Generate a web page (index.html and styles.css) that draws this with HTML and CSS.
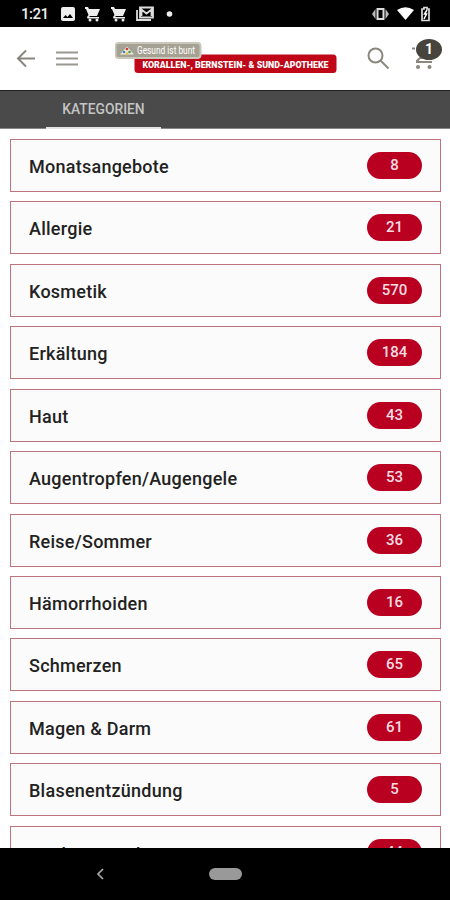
FILE: index.html
```html
<!DOCTYPE html>
<html lang="de">
<head>
    <meta charset="UTF-8">
    <meta name="viewport" content="width=device-width, initial-scale=1.0">
    <title>Kategorien</title>
    <link rel="stylesheet" href="styles.css">
</head>
<body>
    <div class="status-bar">
        <span class="time">1:21</span>
        <svg class="status-left" width="116" height="16" viewBox="0 0 116 16">
            <path fill="#eee" fill-rule="evenodd" d="M3 1h10a2 2 0 0 1 2 2v10a2 2 0 0 1-2 2H3a2 2 0 0 1-2-2V3a2 2 0 0 1 2-2zM3 12h10l-3-4-2.500 3-2-2z"/>
            <g id="cart" fill="#eee">
                <path d="M25 1h3l1 2h11l-3 7h-7l-1 1h10v1.500H27.500L27 11l1.500-2L26 3h-1z"/>
                <circle cx="30" cy="14" r="1.500"/>
                <circle cx="37" cy="14" r="1.500"/>
            </g>
            <use href="#cart" x="26"/>
            <path fill="none" stroke="#ddd" stroke-width="1.800" d="M77 4v10h14M80 1.500h13v10H80zM81.500 10V3.500l5 4 5-4V10"/>
            <circle cx="109.500" cy="8" r="2.800" fill="#eee"/>
        </svg>
        <svg class="status-right" width="62" height="16" viewBox="0 0 62 16">
            <path fill="none" stroke="#ddd" stroke-width="2" d="M5.500 3h6v10h-6z"/>
            <path fill="#bbb" d="M3.500 3v10L0 8zM13.500 3v10L17 8z"/>
            <path fill="#fff" d="M25 4q8.500-5.500 17 0l-8.500 10z"/>
            <path fill="none" stroke="#ddd" stroke-width="1.700" d="M50 3h2V1.500h3V3h2v11.500h-7z"/>
            <path stroke="#fff" stroke-width="1.500" d="M55 4l-2.500 4h2L52 13"/>
        </svg>
    </div>

    <div class="header">
        <svg class="back-icon" width="20" height="20" viewBox="0 0 20 20">
            <path d="M19 9.500H2M10 1.500l-8 8 8 8"/>
        </svg>
        <svg class="menu-icon" width="22" height="16" viewBox="0 0 22 16">
            <path d="M0 1.500h22M0 7.500h22M0 13.500h22"/>
        </svg>
        <svg class="logo" width="224" height="34" viewBox="0 0 224 34">
            <rect x="19.500" y="12.500" width="202" height="18.500" rx="3.500" fill="#c00718"/>
            <rect x="0.500" y="1" width="85" height="15" rx="3" fill="#a6a293" stroke="#c9c6bc"/>
            <path d="M5 12.500l7-8 7 8z" fill="#e9e8dd"/>
            <circle cx="12" cy="7" r="1.300" fill="#d23a35"/>
            <circle cx="9" cy="10" r="1.300" fill="#3d8bb5"/>
            <circle cx="14.500" cy="10" r="1.300" fill="#4b9c4b"/>
            <circle cx="12" cy="11.500" r="1.200" fill="#e8c33c"/>
            <text class="logo-slogan" x="22" y="12" textLength="58" lengthAdjust="spacingAndGlyphs">Gesund ist bunt</text>
            <text class="logo-name" x="27.500" y="26" textLength="186" lengthAdjust="spacingAndGlyphs">KORALLEN-, BERNSTEIN- &amp; SUND-APOTHEKE</text>
        </svg>
        <svg class="search-icon" width="24" height="24" viewBox="0 0 24 24">
            <circle cx="8.500" cy="8.500" r="7"/>
            <path d="M13.500 13.500l8 8"/>
        </svg>
        <div class="cart">
            <svg width="24" height="26" viewBox="0 0 24 26">
                <path class="cart-line" d="M1 4.500h3M10 13l-4 4v1h15M9 14h9l2-2"/>
                <circle cx="7" cy="23" r="2"/>
                <circle cx="18.500" cy="23" r="2"/>
            </svg>
            <span class="cart-count">1</span>
        </div>
    </div>

    <div class="tabs">
        <div class="tab active">KATEGORIEN</div>
    </div>

    <div class="category-list">
        <div class="category"><span class="name">Monatsangebote</span><span class="count">8</span></div>
        <div class="category"><span class="name">Allergie</span><span class="count">21</span></div>
        <div class="category"><span class="name">Kosmetik</span><span class="count">570</span></div>
        <div class="category"><span class="name">Erkältung</span><span class="count">184</span></div>
        <div class="category"><span class="name">Haut</span><span class="count">43</span></div>
        <div class="category"><span class="name">Augentropfen/Augengele</span><span class="count">53</span></div>
        <div class="category"><span class="name">Reise/Sommer</span><span class="count">36</span></div>
        <div class="category"><span class="name">Hämorrhoiden</span><span class="count">16</span></div>
        <div class="category"><span class="name">Schmerzen</span><span class="count">65</span></div>
        <div class="category"><span class="name">Magen &amp; Darm</span><span class="count">61</span></div>
        <div class="category"><span class="name">Blasenentzündung</span><span class="count">5</span></div>
        <div class="category"><span class="name">Kinderwunsch</span><span class="count">44</span></div>
    </div>

    <div class="nav-bar">
        <svg width="8" height="12" viewBox="0 0 8 12">
            <path d="M7 1L2 6l5 5"/>
        </svg>
        <span class="home-pill"></span>
    </div>
</body>
</html>
```

FILE: styles.css
```css
* {
    box-sizing: border-box;
}
body {
    margin: 0;
    height: 900px;
    display: flex;
    flex-direction: column;
    overflow: hidden;
    background-color: #fff;
    font-family: Roboto, Arial, sans-serif;
}
.status-bar {
    flex: none;
    height: 27px;
    display: flex;
    align-items: center;
    padding: 1px 17px 0 21px;
    background-color: #000;
    color: #eee;
}
.time {
    width: 39px;
    font-size: 15px;
    font-weight: 500;
    line-height: 20px;
    letter-spacing: -0.5px;
}
.status-right {
    margin-left: auto;
    margin-right: -1px;
}
.header {
    flex: none;
    height: 63px;
    display: flex;
    align-items: center;
    padding: 0 12px 0 16px;
}
.header svg {
    flex: none;
    fill: none;
    stroke: #8b877f;
    stroke-width: 2;
}
.header .menu-icon {
    margin-left: 20px;
    stroke: #9b9890;
}
.header .logo {
    margin-left: 37px;
    stroke: none;
}
.logo text {
    fill: #fff;
}
.logo-slogan {
    font-size: 10px;
    font-weight: 400;
}
.logo-name {
    font-size: 8.5px;
    font-weight: 900;
}
.header .search-icon {
    margin-left: 28px;
}
.cart {
    position: relative;
    height: 26px;
    margin: -4px 0 0 20px;
}
.cart circle {
    fill: #8b877f;
    stroke: none;
}
.cart-count {
    position: absolute;
    left: 5px;
    top: -5px;
    width: 26px;
    height: 21px;
    border-radius: 50%;
    background-color: #47443d;
    color: #fff;
    font-size: 14px;
    font-weight: 700;
    line-height: 21px;
    text-align: center;
}
.tabs {
    flex: none;
    height: 39px;
    padding-left: 46px;
    display: flex;
    background-color: #4a4a4a;
    border-top: 1px solid #222;
    border-bottom: 1px solid #888;
}
.tab {
    width: 115px;
    height: 38px;
    color: #c4c4c4;
    font-size: 13.8px;
    font-weight: 500;
    line-height: 37px;
    text-align: center;
}
.tab.active {
    border-bottom: 2px solid #e4e4e4;
}
.category-list {
    flex: 1;
    min-height: 0;
    padding: 10px 9px 0 10px;
    overflow: hidden;
}
.category {
    height: 53px;
    margin-bottom: 9.43px;
    padding: 0 18px;
    display: flex;
    align-items: center;
    justify-content: space-between;
    background-color: #fbfbfb;
    border: 1px solid #bd747c;
}
.name {
    padding-top: 2px;
    color: #222;
    font-size: 18px;
    font-weight: 500;
    letter-spacing: 0.25px;
}
.category:last-child .name {
    padding-top: 4px;
}
.count {
    width: 55px;
    height: 27px;
    border-radius: 14px;
    background-color: #b90021;
    color: #fbdde1;
    font-size: 15px;
    font-weight: 500;
    line-height: 27px;
    text-align: center;
}
.nav-bar {
    flex: none;
    height: 52px;
    display: flex;
    align-items: center;
    padding-left: 96px;
    background-color: #000;
}
.nav-bar path {
    fill: none;
    stroke: #aaa;
    stroke-width: 1.7;
}
.home-pill {
    width: 33px;
    height: 12px;
    margin-left: 105px;
    border-radius: 6px;
    background-color: #999;
}
```
